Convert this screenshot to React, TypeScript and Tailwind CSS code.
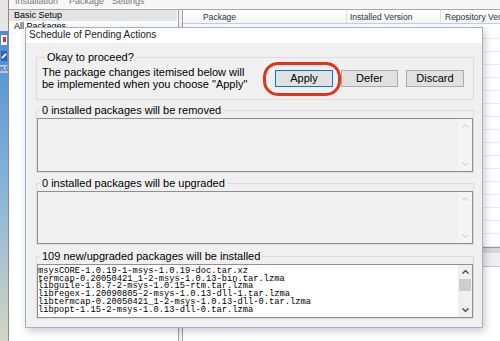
import React from "react";

const Chevron = ({ up, color, w = 1 }: { up?: boolean; color: string; w?: number }) => (
  <svg width="7" height="4" viewBox="0 0 7 4" className="block">
    <path
      d={up ? "M0.5 3.6 L3.5 0.6 L6.5 3.6" : "M0.5 0.4 L3.5 3.4 L6.5 0.4"}
      fill="none"
      stroke={color}
      strokeWidth={w}
    />
  </svg>
);

function EmptyList({ h }: { h: string }) {
  return (
    <div className={"flex border border-[#8f8f8f] bg-[#f0f0f0] " + h}>
      <div className="flex-1" />
      <div className="w-[14px] flex flex-col justify-between bg-[#f5f5f5]">
        <div className="h-[14px] flex items-center justify-center">
          <Chevron up color="#c4c4c4" />
        </div>
        <div className="h-[14px] flex items-center justify-center">
          <Chevron color="#c4c4c4" />
        </div>
      </div>
    </div>
  );
}

const lines = [
  "msysCORE-1.0.19-1-msys-1.0.19-doc.tar.xz",
  "termcap-0.20050421_1-2-msys-1.0.13-bin.tar.lzma",
  "libguile-1.8.7-2-msys-1.0.15-rtm.tar.lzma",
  "libregex-1.20090805-2-msys-1.0.13-dll-1.tar.lzma",
  "libtermcap-0.20050421_1-2-msys-1.0.13-dll-0.tar.lzma",
  "libpopt-1.15-2-msys-1.0.13-dll-0.tar.lzma",
];

const rows = Array.from({ length: 17 }, (_, i) => i);

export default function App() {
  return (
    <div className="relative w-[500px] h-[341px] overflow-hidden bg-white flex font-['Liberation_Sans',Arial,sans-serif] text-black">
      {/* desktop strip */}
      <div className="w-[8px] h-full flex flex-col shrink-0">
        <div className="h-[31px] bg-[#e6e6e6]" />
        <div className="flex-1 flex flex-col items-center bg-gradient-to-b from-[#4d8ccf] via-[#86b4d6] to-[#d2d6c2]">
          <div className="mt-[4px] w-[6px] h-[10px] bg-[#f4f4f4] flex flex-col items-center pt-[2px]">
            <div className="w-[3px] h-[5px] bg-[#d8352a]" />
          </div>
          <div className="mt-[6px] w-[6px] h-[10px] bg-[#2b62b8] flex items-center justify-center">
            <div className="w-[2px] h-[6px] bg-white rotate-45" />
          </div>
          <div className="mt-[4px] w-[8px] h-[8px] bg-[#a9c6ea] text-[7px] leading-[8px] text-[#102a60] overflow-hidden whitespace-nowrap">
            n.G
          </div>
        </div>
      </div>

      {/* background window */}
      <div className="flex-1 flex flex-col border-l border-[#8a8a8a] min-w-0">
        <div className="h-[10px] shrink-0 overflow-hidden bg-[#f7f7f7] border-b border-[#a8a8a8] text-[9px] leading-[10px] text-[#777] flex">
          <span className="-mt-[4px] ml-[6px]">Installation</span>
          <span className="-mt-[4px] ml-[11px]">Package</span>
          <span className="-mt-[4px] ml-[8px]">Settings</span>
        </div>
        <div className="flex-1 flex min-h-0">
          {/* tree pane */}
          <div className="w-[169px] shrink-0 bg-white text-[9px] leading-[11px]">
            <div className="h-[11px] bg-[#e3e3e3] pl-[5px] mr-[1px]">Basic Setup</div>
            <div className="h-[11px] pl-[5px]">All Packages</div>
          </div>
          {/* splitter */}
          <div className="w-[5px] shrink-0 border-x border-[#a0a0a0] bg-[#f0f0f0]" />
          {/* list pane */}
          <div className="flex-1 flex flex-col min-w-0 text-[8.5px] text-[#333]">
            <div className="h-[14px] flex border-b border-[#b9d1ea] bg-gradient-to-b from-white to-[#f6f6f6] leading-[14px] whitespace-nowrap overflow-hidden">
              <div className="w-[163px] shrink-0 pl-[20px]">Package</div>
              <div className="w-[94px] shrink-0 border-l border-[#e0e0e0] pl-[3px]">Installed Version</div>
              <div className="flex-1 border-l border-[#e0e0e0] pl-[4px]">Repository Version</div>
            </div>
            <div className="pt-[2px]">
              {rows.map((r) => (
                <div key={r} className="h-[13px] flex border-b border-[#ececec] leading-[12px] text-[9px]">
                  <div className="w-[257px] shrink-0" />
                  <div className="flex-1 pl-[3px]">{r === 0 || r === 1 || r === 6 ? "0" : ""}</div>
                </div>
              ))}
            </div>
            <div className="border-t border-[#9a9a9a] h-[6px] bg-[#d6d6d6]" />
            <div className="h-[14px] bg-[#efefef] border-b border-[#c4c4c4]" />
            <div className="flex-1 bg-white" />
          </div>
        </div>
      </div>

      {/* dialog */}
      <div className="absolute left-[25px] top-[27px] w-[458px] h-[301px] flex flex-col border border-[#9fb3cc] bg-[#f0f0f0] shadow-[2px_3px_8px_rgba(0,0,0,0.22)]">
        <div className="h-[15px] shrink-0 bg-white pl-[3px] text-[10px] leading-[14px] text-[#222]">
          Schedule of Pending Actions
        </div>
        <div className="flex-1 flex flex-col pl-[10px] pr-[8px] pt-[8px] text-[11px]">
          {/* group 1 */}
          <fieldset className="min-w-0 h-[49px] border border-[#dcdcdc] pl-[5px] pr-[9px] pt-[3px]">
            <legend className="ml-[3px] px-[2px] leading-[12px]">Okay to proceed?</legend>
            <div className="flex items-center">
              <div className="leading-[12px] whitespace-nowrap">
                The package changes itemised below will
                <br />
                be implemented when you choose "Apply"
              </div>
              <div className="ml-auto flex gap-[8px]">
                <div className="relative">
                  <button className="w-[58px] h-[17px] bg-[#e1e1e1] border border-[#0078d7] leading-[15px] text-[11px]">
                    Apply
                  </button>
                  <div className="absolute left-[-12px] top-[-8px] w-[78px] h-[34px] rounded-[15px] border-[3px] border-[#e6321c] pointer-events-none" />
                </div>
                <button className="w-[57px] h-[17px] bg-[#e1e1e1] border border-[#adadad] leading-[15px] text-[11px]">
                  Defer
                </button>
                <button className="w-[58px] h-[17px] bg-[#e1e1e1] border border-[#adadad] leading-[15px] text-[11px]">
                  Discard
                </button>
              </div>
            </div>
          </fieldset>

          {/* group 2 */}
          <fieldset className="min-w-0 mt-[4px] border border-[#dcdcdc] pt-[2px]">
            <legend className="ml-[3px] px-[2px] leading-[12px]">0 installed packages will be removed</legend>
            <EmptyList h="h-[54px]" />
          </fieldset>

          {/* group 3 */}
          <fieldset className="min-w-0 mt-[4px] border border-[#dcdcdc] pt-[2px]">
            <legend className="ml-[3px] px-[2px] leading-[12px]">0 installed packages will be upgraded</legend>
            <EmptyList h="h-[53px]" />
          </fieldset>

          {/* group 4 */}
          <fieldset className="min-w-0 mt-[5px] border border-[#dcdcdc] pt-[2px]">
            <legend className="ml-[3px] px-[2px] leading-[12px]">109 new/upgraded packages will be installed</legend>
            <div className="flex h-[54px] border border-[#8f8f8f] bg-white">
              <div className="flex-1 min-w-0 pt-[3px] font-['Liberation_Mono',monospace] text-[8.75px] leading-[7.7px] overflow-hidden whitespace-pre">
                {lines.map((l) => (
                  <div key={l}>{l}</div>
                ))}
              </div>
              <div className="w-[14px] flex flex-col bg-[#f0f0f0]">
                <div className="h-[14px] flex items-center justify-center">
                  <Chevron up color="#505050" w={1.4} />
                </div>
                <div className="h-[12px] mx-[1px] bg-[#cdcdcd]" />
                <div className="flex-1" />
                <div className="h-[14px] flex items-center justify-center">
                  <Chevron color="#505050" w={1.4} />
                </div>
              </div>
            </div>
          </fieldset>
        </div>
      </div>
    </div>
  );
}
